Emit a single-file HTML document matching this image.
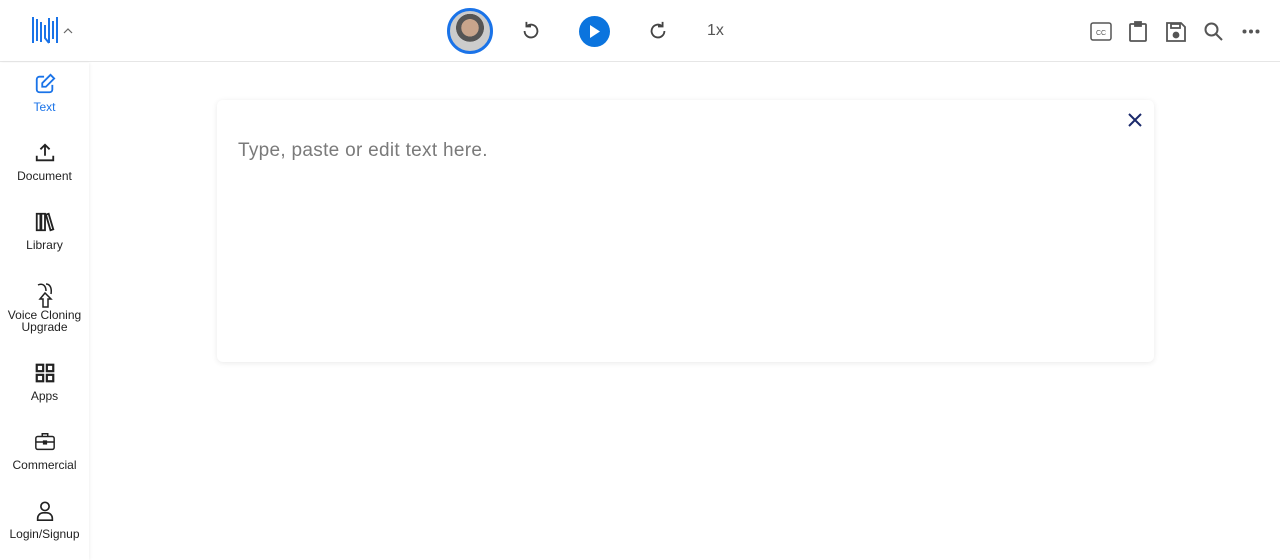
<!DOCTYPE html>
<html><head><style>
*{margin:0;padding:0;box-sizing:border-box}
body{width:1280px;height:560px;background:#fff;font-family:"Liberation Sans",sans-serif;position:relative;overflow:hidden}
.hdr{position:absolute;left:0;top:0;width:1280px;height:62px;background:#fff;border-bottom:1px solid #e6e6e6}
.side{position:absolute;left:0;top:63px;width:89px;height:497px;background:#fff;box-shadow:1px 0 3px rgba(0,0,0,.06)}
.it{position:absolute;left:0;width:89px;text-align:center;font-size:12px;color:#222}
.it svg{display:block;margin:0 auto 5px}
.card{position:absolute;left:217px;top:100px;width:937px;height:262px;background:#fff;border-radius:6px;box-shadow:0 1px 6px rgba(0,0,0,.09)}
.ph{position:absolute;left:21px;top:40px;font-size:19px;color:#7a7a7a;letter-spacing:.3px}
.ic{position:absolute}
</style></head><body>
<div class="hdr">
<svg class="ic" style="left:31px;top:16px" width="28" height="28" viewBox="0 0 28 28" stroke="#1a73e8" stroke-width="2" fill="none"><path d="M2 1v26M6 3v22M10 6v20M14 9v13l4 5M18 2v25M22 5v18M26 1v26"/></svg>
<svg class="ic" style="left:63px;top:27px" width="10" height="7" viewBox="0 0 10 7" stroke="#666" fill="none" stroke-width="1.2"><path d="M1 6l4-4 4 4"/></svg>
<div style="position:absolute;left:447px;top:8px;width:46px;height:46px;border-radius:50%;border:3px solid #1a73e8;background:radial-gradient(circle at 50% 42%,#c9a58c 0 28%,#555 29% 45%,#ccc 46%);"></div>
<svg class="ic" style="left:520px;top:20px" width="22" height="22" viewBox="0 0 24 24" fill="none" stroke="#444" stroke-width="2"><path d="M5 12a7 7 0 1 0 3-5.7"/><path d="M7 2v5h5" /></svg>
<div style="position:absolute;left:579px;top:16px;width:31px;height:31px;border-radius:50%;background:#0b74de"></div>
<svg class="ic" style="left:589px;top:24px" width="12" height="15" viewBox="0 0 12 15"><path d="M1 1l10 6.5L1 14z" fill="#fff"/></svg>
<svg class="ic" style="left:647px;top:20px" width="22" height="22" viewBox="0 0 24 24" fill="none" stroke="#444" stroke-width="2"><path d="M19 12a7 7 0 1 1-3-5.7"/><path d="M17 2v5h-5"/></svg>
<div style="position:absolute;left:707px;top:22px;font-size:16px;color:#555">1x</div>
<svg class="ic" style="left:1090px;top:22px" width="22" height="19" viewBox="0 0 22 19" fill="none" stroke="#555" stroke-width="1.5"><rect x="1" y="1" width="20" height="17" rx="2"/><text x="11" y="13" font-size="7" text-anchor="middle" fill="#555" stroke="none" font-family="Liberation Sans">CC</text></svg>
<svg class="ic" style="left:1129px;top:21px" width="18" height="21" viewBox="0 0 18 21" fill="none" stroke="#555" stroke-width="1.8"><rect x="1" y="3" width="16" height="17" rx="1"/><rect x="6" y="1" width="6" height="4" fill="#555"/></svg>
<svg class="ic" style="left:1166px;top:22px" width="20" height="20" viewBox="0 0 20 20" fill="none" stroke="#555" stroke-width="1.8"><path d="M1 1h14l4 4v14H1z"/><rect x="5" y="2" width="9" height="4"/><circle cx="10" cy="13" r="2.5" fill="#555"/></svg>
<svg class="ic" style="left:1204px;top:22px" width="19" height="19" viewBox="0 0 19 19" fill="none" stroke="#555" stroke-width="2"><circle cx="7.5" cy="7.5" r="6"/><path d="M12 12l6 6"/></svg>
<svg class="ic" style="left:1242px;top:29px" width="18" height="5" viewBox="0 0 18 5" fill="#555"><circle cx="2.5" cy="2.5" r="2"/><circle cx="9" cy="2.5" r="2"/><circle cx="15.5" cy="2.5" r="2"/></svg>
</div>
<div class="side">
<div class="it" style="top:10px;color:#1a73e8"><svg width="22" height="22" viewBox="0 0 24 24" fill="none" stroke="#1a73e8" stroke-width="2"><path d="M11 4H6a3 3 0 0 0-3 3v11a3 3 0 0 0 3 3h11a3 3 0 0 0 3-3v-5"/><path d="M18 2l4 4-9 9H9v-4z"/></svg>Text</div>
<div class="it" style="top:79px"><svg width="22" height="22" viewBox="0 0 24 24" fill="none" stroke="#222" stroke-width="2"><path d="M12 15V3M7 8l5-5 5 5M3 15v5h18v-5"/></svg>Document</div>
<div class="it" style="top:148px"><svg width="22" height="22" viewBox="0 0 24 24" fill="none" stroke="#222" stroke-width="2"><path d="M3 3h4v18H3zM8 3h4v18H8zM13 4l3-1 5 17-3 1z"/></svg>Library</div>
<div class="it" style="top:218px;line-height:12px"><svg width="22" height="30" viewBox="0 0 22 30" fill="none" stroke="#222" stroke-width="1.5" style="margin-bottom:-2px"><path d="M4 4c4-2 8 0 8 6M12 3c4 0 6 4 5 10M11 12l-5 6h3v8h5v-8h3z"/></svg>Voice Cloning<br>Upgrade</div>
<div class="it" style="top:299px"><svg width="22" height="22" viewBox="0 0 24 24" fill="none" stroke="#222" stroke-width="2.4"><rect x="3" y="3" width="7" height="7"/><rect x="14" y="3" width="7" height="7"/><rect x="3" y="14" width="7" height="7"/><rect x="14" y="14" width="7" height="7"/></svg>Apps</div>
<div class="it" style="top:368px"><svg width="22" height="22" viewBox="0 0 24 24" fill="none" stroke="#222" stroke-width="1.6"><rect x="2" y="6" width="20" height="14" rx="2"/><path d="M9 6V3h6v3M2 12h20"/><rect x="10.5" y="11" width="3" height="3" fill="#222"/></svg>Commercial</div>
<div class="it" style="top:437px"><svg width="22" height="22" viewBox="0 0 24 24" fill="none" stroke="#222" stroke-width="1.8"><circle cx="12" cy="7" r="4.5"/><path d="M4 22v-2a6 6 0 0 1 6-6h4a6 6 0 0 1 6 6v2z"/></svg>Login/Signup</div>
</div>
<div class="card"><div class="ph">Type, paste or edit text here.</div>
<svg class="ic" style="left:911px;top:13px" width="14" height="14" viewBox="0 0 14 14" stroke="#1b2a6b" stroke-width="2"><path d="M1 1l12 12M13 1L1 13"/></svg></div>
</body></html>
